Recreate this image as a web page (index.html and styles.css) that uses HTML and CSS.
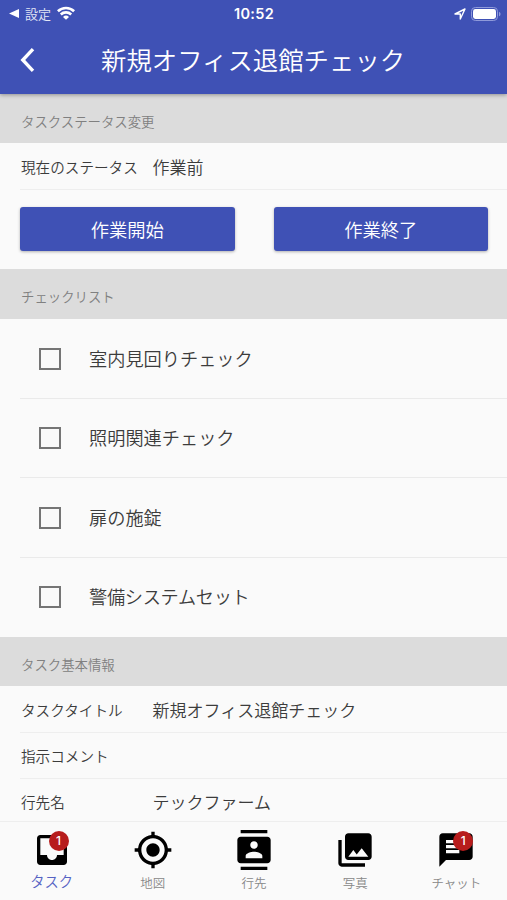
FILE: index.html
```html
<!DOCTYPE html>
<html lang="ja">
<head>
<meta charset="utf-8">
<meta name="viewport" content="width=device-width, initial-scale=1">
<title>新規オフィス退館チェック</title>
<link rel="stylesheet" href="styles.css">
</head>
<body>
<div class="app">
  <header class="header">
    <div class="status">
      <div class="status-left">
        <svg class="back-mark" width="10" height="9" viewBox="0 0 10 9"><path d="M0 4.5 10 0v9z" fill="#fff"/></svg>
        <span class="status-app">設定</span>
        <svg class="wifi" width="18" height="14" viewBox="0 0 18 14" fill="none" stroke="#fff" stroke-width="2.6"><path d="M.9 5.2a11.7 11.7 0 0 1 16.2 0M3.800 8.500a7.500 7.500 0 0 1 10.400 0"/><path d="M9 13.800 6 10.900a4.400 4.400 0 0 1 6 0z" fill="#fff" stroke="none"/></svg>
      </div>
      <span class="time">10:52</span>
      <div class="status-right">
        <svg width="12" height="12" viewBox="0 0 12 12"><path d="M1 6 11 1 6.300 11V6z" fill="none" stroke="#fff" stroke-width="1.4" stroke-linejoin="round"/></svg>
        <svg width="30" height="14" viewBox="0 0 30 14"><rect x=".5" y=".5" width="26" height="13" rx="3.8" fill="none" stroke="#8f9ada"/><rect x="2" y="2" width="23" height="10" rx="2.4" fill="#fff"/><path d="M28 4.700c2 .8 2 3.800 0 4.600z" fill="#8f9ada"/></svg>
      </div>
    </div>
    <div class="toolbar">
      <svg class="back" width="16" height="26" viewBox="0 0 16 26"><path d="M14 2.200 3.800 13 14 23.800" fill="none" stroke="#fff" stroke-width="3.400"/></svg>
      <h1>新規オフィス退館チェック</h1>
    </div>
  </header>

  <main class="content">
    <h2>タスクステータス変更</h2>
    <div class="row row-status"><span class="label">現在のステータス</span><span class="value">作業前</span></div>
    <div class="actions"><button>作業開始</button><button>作業終了</button></div>

    <h2 class="checks-title">チェックリスト</h2>
    <ul class="checks">
      <li><span class="box"></span><span class="check-label">室内見回りチェック</span></li>
      <li><span class="box"></span><span class="check-label">照明関連チェック</span></li>
      <li><span class="box"></span><span class="check-label">扉の施錠</span></li>
      <li><span class="box"></span><span class="check-label tight">警備システムセット</span></li>
    </ul>

    <h2>タスク基本情報</h2>
    <div class="row row-first"><span class="label">タスクタイトル</span><span class="value">新規オフィス退館チェック</span></div>
    <div class="row"><span class="label">指示コメント</span><span class="value"></span></div>
    <div class="row"><span class="label">行先名</span><span class="value">テックファーム</span></div>
  </main>

  <nav class="tabs">
    <a class="tab active">
      <span class="icon"><svg viewBox="0 0 24 24"><path d="M19 3H4.990c-1.110 0-1.980.890-1.980 2L3 19c0 1.100.880 2 1.990 2H19c1.100 0 2-.9 2-2V5c0-1.110-.9-2-2-2zm0 12h-4c0 1.660-1.350 3-3 3s-3-1.340-3-3H4.990V5H19v10z"/></svg><b class="badge">1</b></span>
      <span>タスク</span>
    </a>
    <a class="tab">
      <span class="icon"><svg viewBox="0 0 24 24"><path d="M12 8c-2.210 0-4 1.790-4 4s1.790 4 4 4 4-1.790 4-4-1.790-4-4-4zm8.940 3c-.46-4.170-3.770-7.480-7.940-7.940V1h-2v2.060C6.830 3.520 3.520 6.830 3.060 11H1v2h2.060c.46 4.170 3.770 7.480 7.940 7.940V23h2v-2.060c4.170-.46 7.480-3.770 7.940-7.940H23v-2h-2.060zM12 19c-3.870 0-7-3.130-7-7s3.130-7 7-7 7 3.130 7 7-3.130 7-7 7z"/></svg></span>
      <span>地図</span>
    </a>
    <a class="tab">
      <span class="icon icon-contacts"><svg viewBox="0 0 24 24"><path d="M20 0H4v2h16V0zM4 24h16v-2H4v2zM20 4H4c-1.100 0-2 .9-2 2v12c0 1.100.9 2 2 2h16c1.100 0 2-.9 2-2V6c0-1.100-.9-2-2-2zm-8 2.750c1.240 0 2.250 1.010 2.250 2.250s-1.010 2.250-2.250 2.250S9.750 10.240 9.750 9 10.760 6.750 12 6.750zM17 17H7v-1.500c0-1.670 3.330-2.500 5-2.500s5 .83 5 2.500V17z"/></svg></span>
      <span>行先</span>
    </a>
    <a class="tab">
      <span class="icon"><svg viewBox="0 0 24 24"><path d="M22 16V4c0-1.100-.9-2-2-2H8c-1.100 0-2 .9-2 2v12c0 1.100.9 2 2 2h12c1.100 0 2-.9 2-2zm-11-4l2.030 2.710L16 11l4 5H8l3-4zM2 6v14c0 1.100.9 2 2 2h14v-2H4V6H2z"/></svg></span>
      <span>写真</span>
    </a>
    <a class="tab">
      <span class="icon"><svg viewBox="0 0 24 24"><path d="M20 2H4c-1.100 0-1.990.9-1.990 2L2 22l4-4h14c1.100 0 2-.9 2-2V4c0-1.100-.9-2-2-2zM6 9h12v2H6V9zm8 5H6v-2h8v2zm4-6H6V6h12v2z"/></svg><b class="badge">1</b></span>
      <span>チャット</span>
    </a>
  </nav>
</div>
</body>
</html>
```
FILE: styles.css
```css
* { box-sizing: border-box; }
body {
  margin: 0;
  background: #fafafa;
  color: #3c3c3c;
  font-family: "Noto Sans CJK JP", sans-serif;
  font-weight: 350;
}
.app { display: flex; flex-direction: column; height: 900px; overflow: hidden; }

.header {
  position: relative;
  flex: none;
  height: 94px;
  background: #3f51b5;
  color: #fff;
  box-shadow: 0 1px 4px rgba(0, 0, 0, .35);
}
.status {
  display: grid;
  grid-template-columns: 1fr auto 1fr;
  align-items: center;
  height: 27px;
  padding: 0 8px 0 9px;
}
.status-left, .status-right { display: flex; align-items: center; }
.status-right { justify-content: flex-end; gap: 5px; margin-right: -2px; }
.status-app { margin: 0 6px 0 6px; font-size: 13px; line-height: 20px; color: #e4e7f6; }
.wifi { margin-top: -2px; }
.time { font: 600 14.500px/20px Inter, sans-serif; letter-spacing: .3px; }
.toolbar { display: flex; align-items: center; height: 67px; padding: 0 0 2px 19px; }
.back { flex: none; }
h1 { margin: -1px 0 0 66px; font-size: 25.400px; font-weight: 350; line-height: 36px; white-space: nowrap; }

.content { flex: 1; min-height: 0; overflow: hidden; }
h2 {
  height: 49px;
  margin: 0;
  padding: 3px 0 0 21px;
  background: #dcdcdc;
  color: #808080;
  font-size: 13.400px;
  font-weight: 350;
  line-height: 48px;
}
.row {
  display: flex;
  align-items: center;
  height: 46px;
  margin-left: 20px;
  border-bottom: 1px solid #eee;
  line-height: 28px;
}
.row-status, .row-first { height: 47px; padding-top: 1px; }
.label { width: 132.500px; padding-left: 1px; font-size: 14.600px; white-space: nowrap; }
.value { font-size: 17px; }
.actions {
  display: grid;
  grid-template-columns: 1fr 1fr;
  gap: 39px;
  height: 79px;
  padding: 17px 19px 18px 20px;
}
button {
  border: 0;
  border-radius: 3px;
  background: #3f51b5;
  color: #fff;
  font: 350 18.300px/28px "Noto Sans CJK JP", sans-serif;
  box-shadow: 0 1px 3px rgba(0, 0, 0, .3);
}
.checks-title { height: 50px; }
.checks { margin: 0 0 0 20px; padding: 0; list-style: none; }
.checks li {
  display: flex;
  align-items: center;
  gap: 28px;
  height: 79.500px;
  padding-left: 19px;
  border-bottom: 1px solid #eaeaea;
  font-size: 18.200px;
  line-height: 28px;
}
.checks li:last-child { border-bottom-color: transparent; }
.check-label { padding-bottom: 1px; }
.tight { letter-spacing: -.3px; }
.box { width: 22px; height: 22px; margin-top: 1px; border: 2px solid #757575; }

.tabs {
  display: grid;
  grid-template-columns: repeat(5, 101.200px);
  flex: none;
  height: 79px;
  padding-left: 1px;
  background: #fafafa;
  border-top: 1px solid #eee;
}
.tab {
  display: flex;
  flex-direction: column;
  align-items: center;
  padding-top: 8px;
  color: #888;
  font-size: 12.500px;
  line-height: 25px;
}
.tab.active { color: #5562c3; font-size: 14.300px; line-height: 22px; }
.icon { position: relative; width: 40px; height: 40px; }
.icon svg { display: block; width: 40px; height: 40px; fill: #000; }
.badge {
  position: absolute;
  top: 1px;
  right: 3px;
  width: 20px;
  height: 20px;
  border-radius: 50%;
  background: #b71c1c;
  color: #fff;
  font: 500 12px/20px Inter, sans-serif;
  text-align: center;
}
```
